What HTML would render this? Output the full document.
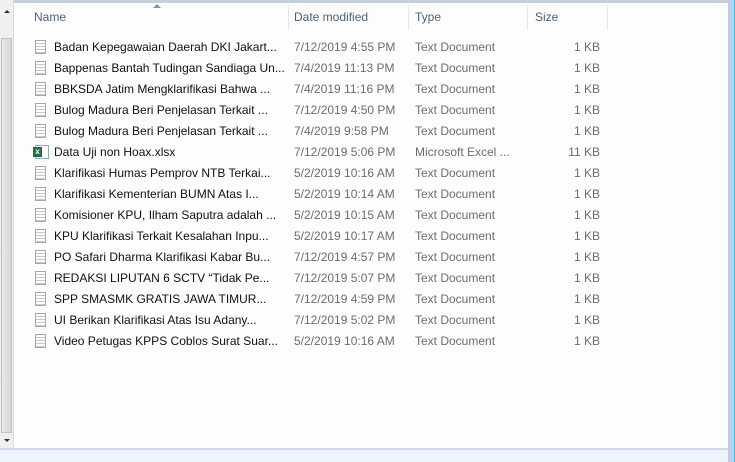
<!DOCTYPE html>
<html><head><style>
body{margin:0;width:735px;height:462px;overflow:hidden;background:#fdfdfd;font-family:"Liberation Sans",sans-serif;font-size:12px;position:relative}
.a{position:absolute}
.row{position:absolute;left:0;height:21px;line-height:21px;width:620px}
.row span{position:absolute;white-space:nowrap}
.n{left:54px;color:#111}
.d{left:294px;color:#6d6d6d}
.t{left:415px;color:#6d6d6d}
.s{right:20px;color:#6d6d6d}
.ic{position:absolute;left:35px;top:3px;width:11px;height:14px;border:1px solid #a8a8a8;background:repeating-linear-gradient(#fff 0 2px,#c8c8c8 2px 3px);box-sizing:border-box}
.hd{position:absolute;top:10px;color:#4c607a;font-size:12px}
.sep{position:absolute;top:4px;width:1px;height:26px;background:#e3e8f0}
</style></head><body>
<div class="a" style="left:0;top:0;width:735px;height:3px;background:#c5cedb"></div>
<div class="a" style="left:0;top:0;width:13px;height:450px;background:#f0f0f0"></div>
<div class="a" style="left:1px;top:38px;width:11px;height:395px;background:linear-gradient(90deg,#e8e8e8,#d8d8d8);border:1px solid #c2c2c2;box-sizing:border-box"></div>
<div class="a" style="left:13px;top:0;width:1px;height:450px;background:#cfdcef"></div>
<div class="a" style="left:4px;top:10px;width:0;height:0;border-left:3px solid transparent;border-right:3px solid transparent;border-bottom:3px solid #333"></div>
<div class="a" style="left:4px;top:439px;width:0;height:0;border-left:3px solid transparent;border-right:3px solid transparent;border-top:3px solid #333"></div>
<div class="a" style="left:728px;top:0;width:7px;height:462px;background:#b9d1ea"></div>
<div class="a" style="left:734px;top:0;width:1px;height:462px;background:#3cc8f0"></div>
<div class="a" style="left:0;top:448px;width:728px;height:2px;background:#cfdbeb"></div>
<div class="a" style="left:0;top:450px;width:728px;height:12px;background:#eff3fb"></div>
<div class="a" style="left:153px;top:4px;width:0;height:0;border-left:4px solid transparent;border-right:4px solid transparent;border-bottom:4px solid #7d93b0"></div>
<div class="hd" style="left:34px">Name</div>
<div class="hd" style="left:294px">Date modified</div>
<div class="hd" style="left:415px">Type</div>
<div class="hd" style="left:535px">Size</div>
<div class="sep" style="left:288px"></div>
<div class="sep" style="left:408px"></div>
<div class="sep" style="left:527px"></div>
<div class="sep" style="left:607px"></div>

<div class="row" style="top:37px"><i class="ic"></i><span class="n">Badan Kepegawaian Daerah DKI Jakart...</span><span class="d">7/12/2019 4:55 PM</span><span class="t">Text Document</span><span class="s">1 KB</span></div>
<div class="row" style="top:58px"><i class="ic"></i><span class="n">Bappenas Bantah Tudingan Sandiaga Un...</span><span class="d">7/4/2019 11:13 PM</span><span class="t">Text Document</span><span class="s">1 KB</span></div>
<div class="row" style="top:79px"><i class="ic"></i><span class="n">BBKSDA Jatim Mengklarifikasi Bahwa ...</span><span class="d">7/4/2019 11:16 PM</span><span class="t">Text Document</span><span class="s">1 KB</span></div>
<div class="row" style="top:100px"><i class="ic"></i><span class="n">Bulog Madura Beri Penjelasan Terkait ...</span><span class="d">7/12/2019 4:50 PM</span><span class="t">Text Document</span><span class="s">1 KB</span></div>
<div class="row" style="top:121px"><i class="ic"></i><span class="n">Bulog Madura Beri Penjelasan Terkait ...</span><span class="d">7/4/2019 9:58 PM</span><span class="t">Text Document</span><span class="s">1 KB</span></div>
<div class="row" style="top:142px"><i class="a" style="left:35px;top:3px;width:14px;height:14px;background:#fff;border:1px solid #9ab;box-sizing:border-box"></i><i class="a" style="left:33px;top:5px;width:9px;height:10px;background:#1e7145;color:#fff;font-size:8px;line-height:10px;text-align:center;font-style:normal;font-weight:bold">x</i><span class="n">Data Uji non Hoax.xlsx</span><span class="d">7/12/2019 5:06 PM</span><span class="t">Microsoft Excel ...</span><span class="s">11 KB</span></div>
<div class="row" style="top:163px"><i class="ic"></i><span class="n">Klarifikasi Humas Pemprov NTB Terkai...</span><span class="d">5/2/2019 10:16 AM</span><span class="t">Text Document</span><span class="s">1 KB</span></div>
<div class="row" style="top:184px"><i class="ic"></i><span class="n">Klarifikasi Kementerian BUMN Atas I...</span><span class="d">5/2/2019 10:14 AM</span><span class="t">Text Document</span><span class="s">1 KB</span></div>
<div class="row" style="top:205px"><i class="ic"></i><span class="n">Komisioner KPU, Ilham Saputra adalah ...</span><span class="d">5/2/2019 10:15 AM</span><span class="t">Text Document</span><span class="s">1 KB</span></div>
<div class="row" style="top:226px"><i class="ic"></i><span class="n">KPU Klarifikasi Terkait Kesalahan Inpu...</span><span class="d">5/2/2019 10:17 AM</span><span class="t">Text Document</span><span class="s">1 KB</span></div>
<div class="row" style="top:247px"><i class="ic"></i><span class="n">PO Safari Dharma Klarifikasi Kabar Bu...</span><span class="d">7/12/2019 4:57 PM</span><span class="t">Text Document</span><span class="s">1 KB</span></div>
<div class="row" style="top:268px"><i class="ic"></i><span class="n">REDAKSI LIPUTAN 6 SCTV “Tidak Pe...</span><span class="d">7/12/2019 5:07 PM</span><span class="t">Text Document</span><span class="s">1 KB</span></div>
<div class="row" style="top:289px"><i class="ic"></i><span class="n">SPP SMASMK GRATIS JAWA TIMUR...</span><span class="d">7/12/2019 4:59 PM</span><span class="t">Text Document</span><span class="s">1 KB</span></div>
<div class="row" style="top:310px"><i class="ic"></i><span class="n">UI Berikan Klarifikasi Atas Isu Adany...</span><span class="d">7/12/2019 5:02 PM</span><span class="t">Text Document</span><span class="s">1 KB</span></div>
<div class="row" style="top:331px"><i class="ic"></i><span class="n">Video Petugas KPPS Coblos Surat Suar...</span><span class="d">5/2/2019 10:16 AM</span><span class="t">Text Document</span><span class="s">1 KB</span></div>
</body></html>
